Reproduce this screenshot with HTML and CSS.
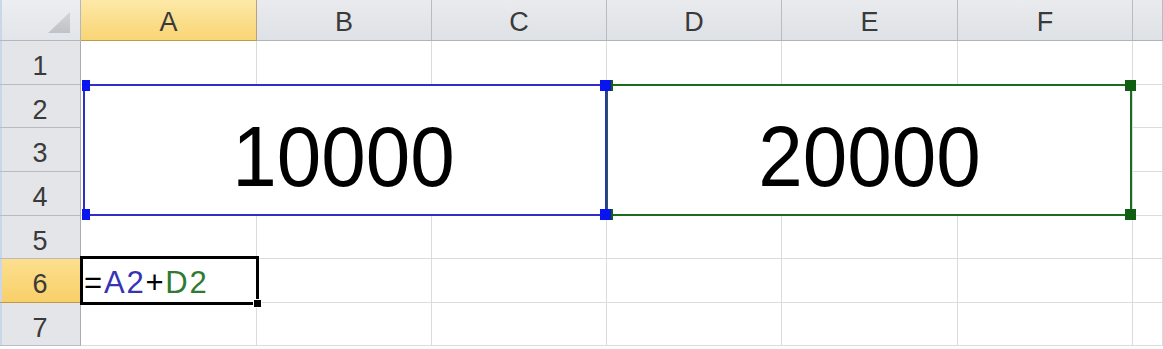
FILE: index.html
```html
<!DOCTYPE html>
<html lang="en">
<head>
<meta charset="UTF-8">
<title>Sheet</title>
<link rel="stylesheet" href="styles.css">
</head>
<body>

<div class="sheet">
  <!-- column headers -->
  <div class="corner"><div class="triangle"></div></div>
  <div class="colHead active">A</div>
  <div class="colHead">B</div>
  <div class="colHead">C</div>
  <div class="colHead">D</div>
  <div class="colHead">E</div>
  <div class="colHead">F</div>
  <div class="colHead"></div>

  <!-- row 1 -->
  <div class="rowHead">1</div>
  <div class="cell"></div><div class="cell"></div><div class="cell"></div>
  <div class="cell"></div><div class="cell"></div><div class="cell"></div><div class="cell"></div>

  <!-- rows 2-4 (merged) -->
  <div class="rowHead">2</div>
  <div class="cell merged">
    <span>10000</span>
    <div class="range blueRange">
      <i class="handle tl"></i><i class="handle tr"></i><i class="handle bl"></i><i class="handle br"></i>
    </div>
  </div>
  <div class="cell merged">
    <span>20000</span>
    <div class="range greenRange">
      <i class="handle tl"></i><i class="handle tr"></i><i class="handle bl"></i><i class="handle br"></i>
    </div>
  </div>
  <div class="cell"></div>
  <div class="rowHead">3</div>
  <div class="cell"></div>
  <div class="rowHead">4</div>
  <div class="cell"></div>

  <!-- row 5 -->
  <div class="rowHead">5</div>
  <div class="cell"></div><div class="cell"></div><div class="cell"></div>
  <div class="cell"></div><div class="cell"></div><div class="cell"></div><div class="cell"></div>

  <!-- row 6 -->
  <div class="rowHead active">6</div>
  <div class="cell editing">
    <span class="formula">=<span class="refBlue">A2</span>+<span class="refGreen">D2</span></span>
    <div class="cursorBox"><i class="fillHandle"></i></div>
  </div>
  <div class="cell"></div><div class="cell"></div>
  <div class="cell"></div><div class="cell"></div><div class="cell"></div><div class="cell"></div>

  <!-- row 7 -->
  <div class="rowHead">7</div>
  <div class="cell"></div><div class="cell"></div><div class="cell"></div>
  <div class="cell"></div><div class="cell"></div><div class="cell"></div><div class="cell"></div>
</div>

</body>
</html>
```

FILE: styles.css
```css
html, body {
  margin: 0;
  padding: 0;
  background-color: #fff;
  overflow: hidden;
}
.sheet {
  display: grid;
  grid-template-columns: 81px 176px 175px 175px 175px 176px 175px 30px;
  grid-template-rows: 41px 44px 43px 44px 44px 43px 44px 43px 10px;
  width: 1163px;
  height: 349px;
  font-family: "Liberation Sans", Arial, sans-serif;
}
.sheet > div {
  box-sizing: border-box;
}
.corner {
  position: relative;
  background: linear-gradient(#eceef1, #e2e5e9);
  border-right: 1px solid #b4b8be;
  border-bottom: 1px solid #b4b8be;
  box-shadow: inset 2px 0 #c9d7e8;
}
.triangle {
  position: absolute;
  left: 48px;
  top: 12px;
  width: 22px;
  height: 21px;
  background: linear-gradient(#d2d4d8, #bfc2c7);
  clip-path: polygon(100% 0, 100% 100%, 0 100%);
}
.colHead {
  display: flex;
  justify-content: center;
  align-items: center;
  padding-top: 5px;
  background: linear-gradient(#e9ebee, #dee1e5);
  border-right: 1px solid #b8bcc2;
  border-bottom: 1px solid #b0b4ba;
  color: #3a3a3a;
  font-size: 27px;
}
.colHead.active {
  background: linear-gradient(#fde9a8, #f9d574);
  border-right-color: #b8a27a;
  border-bottom-color: #c09a48;
}
.rowHead {
  display: flex;
  justify-content: center;
  align-items: center;
  padding-top: 8px;
  background-color: #e3e5e9;
  border-right: 1px solid #a9adb3;
  border-bottom: 1px solid #b8bcc2;
  box-shadow: inset 2px 0 #c9d7e8;
  color: #3a3a3a;
  font-size: 27px;
}
.rowHead.active {
  background: linear-gradient(#fcdf8e, #f8d06a);
  border-right-color: #c09a48;
  border-bottom-color: #c09a48;
}
.cell {
  position: relative;
  background-color: #fff;
  border-right: 1px solid #dadbdc;
  border-bottom: 1px solid #dadbdc;
}
.merged {
  grid-column: span 3;
  grid-row: span 3;
  display: flex;
  justify-content: center;
  align-items: center;
  padding-top: 14px;
  font-size: 80px;
  color: #000;
}
.merged span {
  display: inline-block;
  transform: scaleY(1.06);
}
.range {
  position: absolute;
  top: -1px;
  bottom: -1px;
  border: 2px solid;
}
.blueRange {
  left: 2px;
  right: -1px;
  border-color: #2f2fc8;
  z-index: 3;
}
.greenRange {
  left: -1px;
  right: 0;
  border-color: #1d6b1d;
  z-index: 2;
}
.handle {
  position: absolute;
  width: 11px;
  height: 11px;
}
.blueRange .handle {
  background-color: #0a14f0;
}
.greenRange .handle {
  background-color: #0f5e12;
}
.handle.tl { left: -6px; top: -6px; }
.handle.tr { right: -6px; top: -6px; }
.handle.bl { left: -6px; bottom: -6px; }
.handle.br { right: -6px; bottom: -6px; }
.blueRange .handle.tl,
.blueRange .handle.bl {
  left: -3px;
  width: 8px;
}
.editing {
  display: flex;
  align-items: flex-end;
  padding: 0 0 4px 3px;
}
.formula {
  font-size: 31px;
  letter-spacing: 1.8px;
  color: #000;
  line-height: 1;
}
.refBlue {
  color: #3434b4;
}
.refGreen {
  color: #2f7a32;
}
.cursorBox {
  position: absolute;
  left: -1px;
  top: -3px;
  right: -3px;
  bottom: -3px;
  border: 3px solid #000;
  z-index: 4;
}
.fillHandle {
  position: absolute;
  right: -6px;
  bottom: -6px;
  width: 7px;
  height: 7px;
  background-color: #000;
  border: 1px solid #fff;
}
```
